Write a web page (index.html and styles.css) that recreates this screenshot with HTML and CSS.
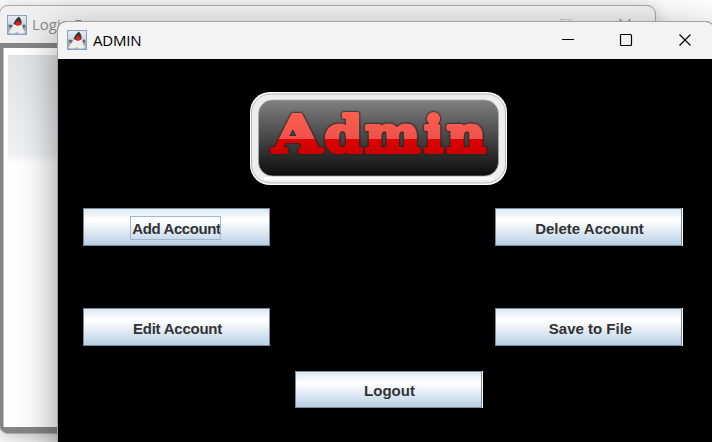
FILE: index.html
```html
<!DOCTYPE html>
<html lang="en">
<head>
<meta charset="utf-8">
<title>ADMIN</title>
<link rel="stylesheet" href="styles.css">
</head>
<body>
<svg class="defs" aria-hidden="true">
  <defs>
    <linearGradient id="tile" x1="0" y1="0" x2="0" y2="1"><stop offset="0" stop-color="#e6edf4"/><stop offset=".5" stop-color="#cbd6e0"/><stop offset="1" stop-color="#9eb3c7"/></linearGradient>
    <linearGradient id="letters" gradientUnits="userSpaceOnUse" x1="0" y1="18" x2="0" y2="64"><stop offset="0" stop-color="#ff604f"/><stop offset=".62" stop-color="#ed524b"/><stop offset=".62" stop-color="#e00000"/><stop offset="1" stop-color="#c80000"/></linearGradient>
    <symbol id="java" viewBox="0 0 20 20">
      <rect x=".5" y=".5" width="19" height="19" fill="url(#tile)" stroke="#8aa3bb"/>
      <path d="M1 12l5 1v4H1zM14 13l5-2v5h-4z" fill="#a3adb5"/>
      <path d="M1.500 9.500l4 .5 2 2-3 1.500-3-2zM14 10l4-.5.500 2.500-3 1.500z" fill="#666c70"/>
      <path d="M11 4L7.500 8 5 12l-3.500 5.500 3 1 3.500-.5 2-1 2 1.500h4l2-1.500-2-3-1-6z" fill="#ededeb"/>
      <path d="M12 1.500C9.500 3.500 7.500 5.500 6.500 9l3.500 1.500 4.500-1c.5-3-.5-6-2.500-8z" fill="#34383b"/>
      <ellipse cx="11.200" cy="8.500" rx="2.500" ry="2.300" fill="#f01c1c"/>
    </symbol>
  </defs>
</svg>
<div class="desktop">
  <section class="window login">
    <header class="titlebar">
      <svg class="app-icon"><use href="#java"/></svg>
      <span class="title">Login Form</span>
      <svg class="controls" viewBox="0 0 130 14"><path class="faint" d="M59.500 1.500h10v10h-10z"/><path d="M118.500 1l11 11m0-11l-11 11"/></svg>
    </header>
    <div class="login-body"><div class="login-picture"></div></div>
  </section>
  <section class="window admin">
    <header class="titlebar">
      <svg class="app-icon"><use href="#java"/></svg>
      <span class="title">ADMIN</span>
      <svg class="controls" viewBox="0 0 130 14"><path d="M0 6.500h12"/><rect x="58.500" y="1.500" width="11" height="11" rx="1"/><path d="M117.500 1.500l11 11m0-11l-11 11"/></svg>
    </header>
    <main class="panel">
      <svg class="logo" viewBox="0 0 257 93" role="img" aria-label="Admin">
        <defs><linearGradient id="plate" x1="0" y1="0" x2="0" y2="1"><stop offset="0" stop-color="#808080"/><stop offset="1" stop-color="#0c0c0c"/></linearGradient></defs>
        <rect width="257" height="93" rx="20" fill="#fff"/>
        <rect x="1.500" y="2" width="254" height="89" rx="19" fill="#ededed" stroke="#b5b5b5"/>
        <path d="M14 86.500h229" stroke="#fff" stroke-width="3"/>
        <rect x="8.500" y="8" width="240" height="76" rx="14" fill="url(#plate)" stroke="#aaa" stroke-width=".7"/>
        <g class="letters"><text x="23" y="60" textLength="48" lengthAdjust="spacingAndGlyphs">A</text><text x="74.500" y="60" textLength="38" lengthAdjust="spacingAndGlyphs">d</text><text x="115" y="60" textLength="55" lengthAdjust="spacingAndGlyphs">m</text><text x="174" y="60" textLength="19.500" lengthAdjust="spacingAndGlyphs">i</text><text x="196.500" y="60" textLength="39.500" lengthAdjust="spacingAndGlyphs">n</text></g>
      </svg>
      <div class="actions">
        <button class="btn focused"><span>Add Account</span></button>
        <button class="btn edged"><span>Delete Account</span></button>
        <button class="btn tight"><span>Edit Account</span></button>
        <button class="btn edged save"><span>Save to File</span></button>
      </div>
      <button class="btn edged logout"><span>Logout</span></button>
    </main>
  </section>
</div>
</body>
</html>
```
FILE: styles.css
```css
* { box-sizing: border-box; }
body { margin: 0; overflow: hidden; font-family: "Open Sans", "Noto Sans", sans-serif; }
.defs { position: absolute; width: 0; height: 0; }
.desktop { position: relative; width: 712px; height: 442px; overflow: hidden; background: #fdfdfd; }
.window { position: absolute; display: flex; flex-direction: column; }
.titlebar { display: flex; align-items: center; flex: none; }
.app-icon { width: 20px; height: 20px; flex: none; }
.title { white-space: nowrap; }
.controls { width: 130px; height: 14px; margin-left: auto; fill: none; stroke: currentColor; stroke-width: 1.2; flex: none; }

.login { left: -1px; top: 5px; width: 657px; height: 429px; border: 1px solid #aaa; border-radius: 9px; overflow: hidden; background: #858585; box-shadow: 0 3px 18px rgba(0,0,0,.25); }
.login .titlebar { height: 37px; padding: 0 24px 0 7px; gap: 5px; background: #f0f0f0; color: #8c8c8c; }
.login .title { font-size: 15px; line-height: 20px; padding-bottom: 1px; }
.login .faint { stroke: #ccc; }
.login-body { flex: 1; margin: 5px 4px 6px 3px; padding: 7px 4px; border-left: 1px solid #c4c4c4; background: #fff; }
.login-picture { height: 108px; background: linear-gradient(#e0e4e6, #eceef2 75%, #f0f1f2 92%, #fff); }

.admin { left: 57px; top: 21px; width: 658px; height: 440px; border: 1px solid #a2a2a2; border-radius: 9px 9px 0 0; background: #000; box-shadow: 0 14px 40px rgba(0,0,0,.42); overflow: hidden; }
.admin .titlebar { height: 37px; padding: 0 22px 0 9px; gap: 6px; background: #f3f3f3; color: #000; }
.admin .app-icon { margin-top: -2px; }
.admin .title { font-size: 15px; letter-spacing: -.2px; padding-bottom: 2px; }
.admin .controls { margin-top: -1px; }
.panel { width: 654px; padding: 33px 25px 0; }
.logo { display: block; width: 257px; height: 93px; margin-left: 167px; }
.letters { font: bold 51px "DejaVu Serif", serif; fill: url(#letters); stroke: url(#letters); stroke-width: 3.8px; stroke-linejoin: round; filter: drop-shadow(0 0 1px #2b1c1c) drop-shadow(0 0 .5px #2b1c1c); }
.actions { display: grid; grid-template-columns: 187px 188px; column-gap: 225px; row-gap: 62px; margin-top: 23px; }
.btn { display: flex; align-items: center; justify-content: center; width: 187px; height: 38px; padding: 4px 0 0; border: 1px solid #7a8a99; border-radius: 0; background: linear-gradient(#dde8f3, #fff 30%, #fff 33%, #b8cfe5); color: #333; font: bold 15px/20px "Liberation Sans", Arial, sans-serif; white-space: nowrap; }
.btn span { display: block; position: relative; left: 1px; }
.edged { box-shadow: 1px 0 #fff; }
.focused { letter-spacing: -.4px; }
.focused span { left: 0; }
.tight { letter-spacing: -.25px; }
.save span { left: 2px; }
.focused span::before { content: ""; position: absolute; left: -2px; top: -3px; right: 0; height: 22px; border: 1px solid #a3b8cc; }
.logout { height: 37px; margin: 25px 0 0 212px; padding-top: 2px; }
```
